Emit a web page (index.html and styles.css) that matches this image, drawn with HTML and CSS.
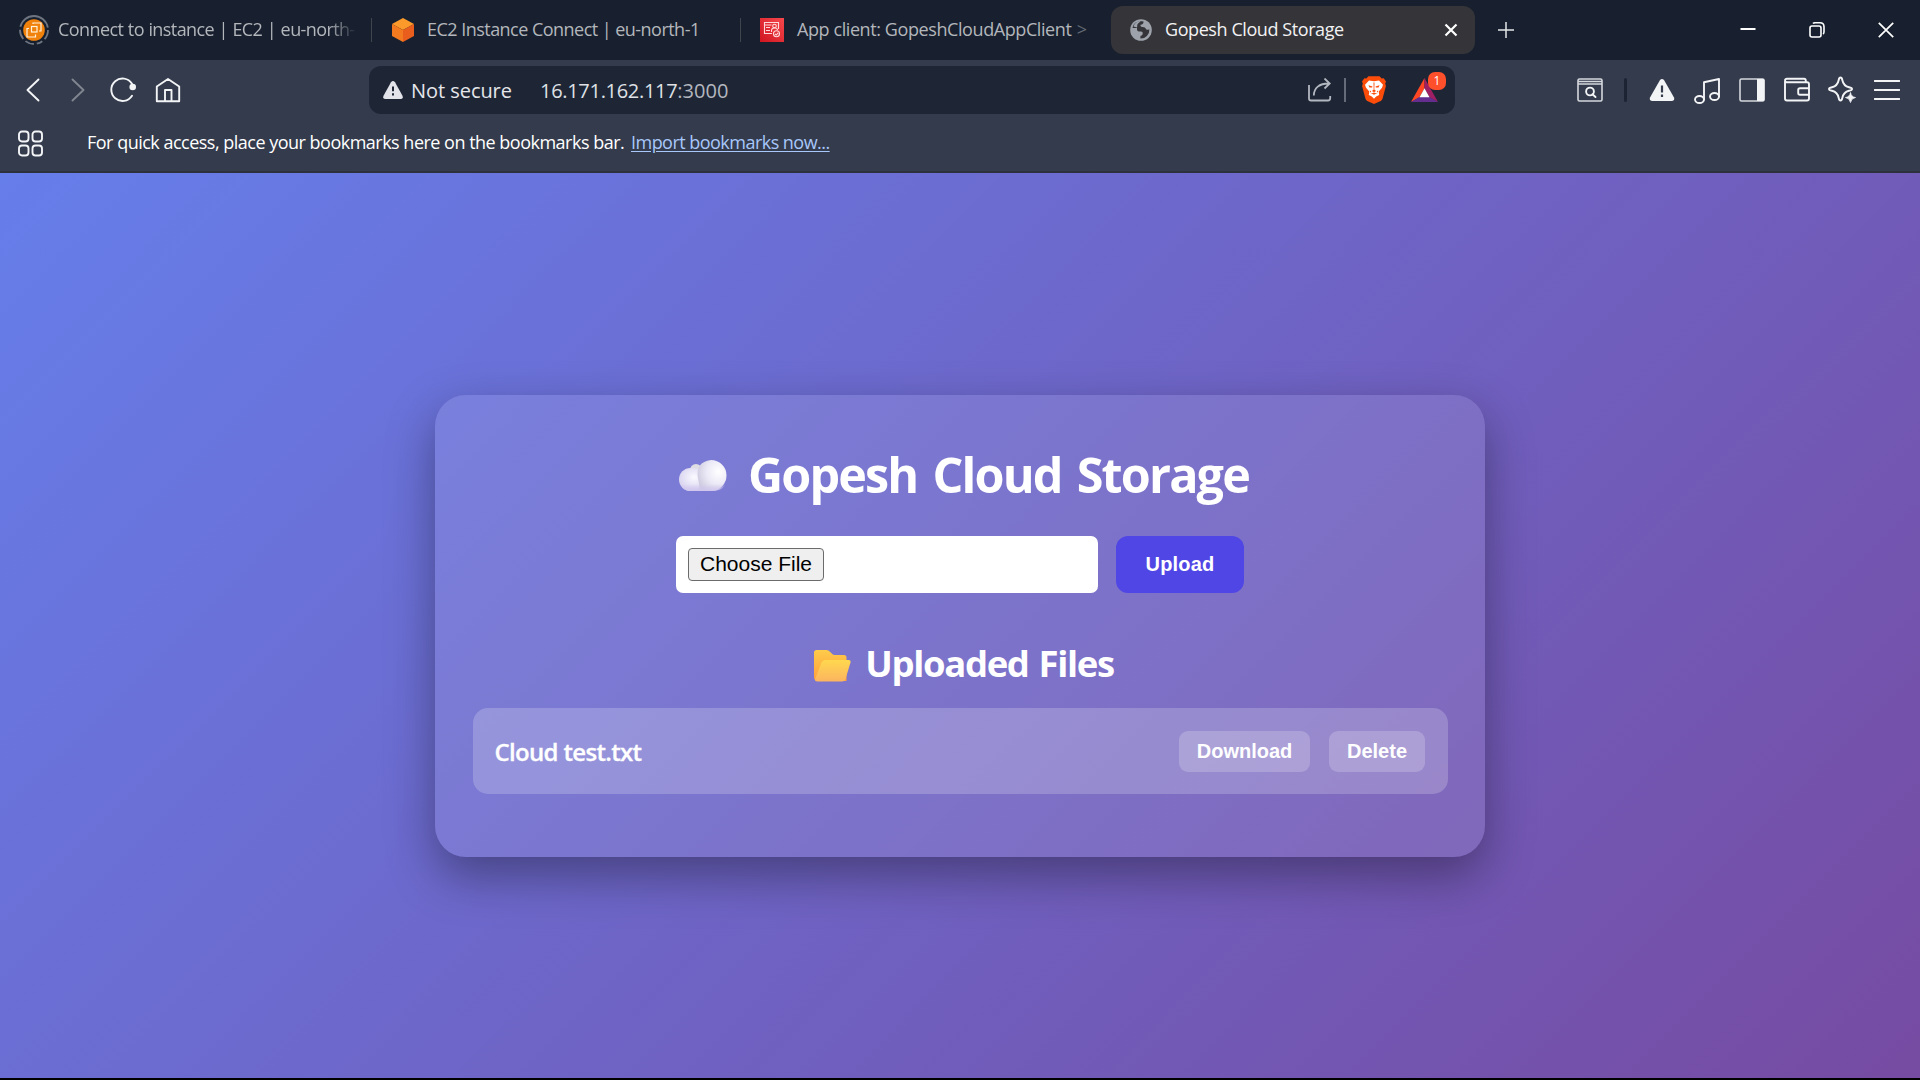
FILE: index.html
```html
<!DOCTYPE html>
<html lang="en">
<head>
<meta charset="utf-8">
<title>Gopesh Cloud Storage</title>
<link rel="stylesheet" href="styles.css">
</head>
<body>
<header class="browser">
  <div class="tab-strip">
    <div class="tab tab-first">
      <svg class="tab-icon ring-icon" width="32" height="32" viewBox="0 0 32 32">
        <circle cx="16" cy="16" r="14" fill="none" stroke="#6f7580" stroke-width="1.800" stroke-dasharray="10 3 6 3 9 3 10 3 38 3"/>
        <circle cx="16" cy="16" r="10.8" fill="#f0820c"/>
        <g fill="none" stroke="#fff2de" stroke-width="1.2"><rect x="13.500" y="12.5" width="5.500" height="5.500"/><path d="M15 10V9h8v8h-2M11 14.500H9V23h8.500v-2.500"/></g>
      </svg>
      <span class="tab-title title-fade">Connect to instance | EC2 | eu-north-1</span>
    </div>
    <div class="tab tab-divided tab-ec2">
      <svg class="tab-icon" width="24" height="24" viewBox="0 0 24 24">
        <path d="M12 0l11 6-11 6L1 6z" fill="#fb9a2a"/><path d="M1 6l11 6v12L1 18z" fill="#f47a20"/><path d="M23 6l-11 6v12l11-6z" fill="#e95e1d"/>
      </svg>
      <span class="tab-title title-ec2">EC2 Instance Connect | eu-north-1</span>
    </div>
    <div class="tab tab-divided tab-cognito">
      <svg class="tab-icon" width="24" height="24" viewBox="0 0 24 24">
        <defs><linearGradient id="red" x1="0" y1="1" x2="1" y2="0"><stop offset="0" stop-color="#cf1420"/><stop offset="1" stop-color="#f7484c"/></linearGradient></defs>
        <rect width="24" height="24" fill="url(#red)"/>
        <g fill="none" stroke="#ffd9d9" stroke-width="1.100"><path d="M12 15.500H4.500v-11h14V11"/><path d="M4.500 7h7M6 9.500h4M6 12.500h4"/><circle cx="14.500" cy="8" r="1.800"/><path d="M11.500 14v-1.500q0-2.500 3-2.500t3 2"/><circle cx="16.500" cy="15.800" r="3"/><path d="M15 15.800l1.200 1.200 2-2.200"/></g>
      </svg>
      <span class="tab-title title-client">App client: GopeshCloudAppClient <span class="faint">&gt;</span></span>
    </div>
    <div class="tab tab-active">
      <svg class="tab-icon" width="22" height="22" viewBox="0 0 22 22">
        <circle cx="11" cy="11" r="10.800" fill="#9da2ab"/>
        <path d="M13.500 2.600c.3 2-1 3-3 3.200-.4 2 1 2.300 3.600 2.400 1.700.2 1.400 2.400 3.300 2.600l2-.3a8.600 8.600 0 0 1-9 9v-2.500c2-.4 2.500-1.700 2.300-3.200-.5-1.600-2-1.300-3.800-1.300-2 0-2-1.800-1.900-3.400H2.600c.2-3.500 3.500-8 10.900-6.500z" fill="#353539"/>
        <path d="M3.500 7.500L7 8.600c.5-1.900-.2-2.600 1-4 .8-1 1.900-.9 2.300-2.600C7 2.200 4.200 4.500 3.500 7.500z" fill="#9da2ab"/>
      </svg>
      <span class="tab-title title-active">Gopesh Cloud Storage</span>
      <svg class="tab-close" width="14" height="14" viewBox="0 0 14 14"><path d="M1.500 1.500l11 11M12.500 1.500l-11 11" stroke="#fff" stroke-width="2.200"/></svg>
    </div>
    <svg class="new-tab" width="16" height="16" viewBox="0 0 16 16"><path d="M0 8h16M8 0v16" stroke="#e3e5e8" stroke-width="1.500"/></svg>
    <div class="window-controls">
      <span class="control"><svg width="16" height="16" viewBox="0 0 16 16"><path d="M.5 7h15" stroke="#fff" stroke-width="2"/></svg></span>
      <span class="control"><svg width="16" height="16" viewBox="0 0 16 16"><g fill="none" stroke="#fff" stroke-width="1.600"><rect x="1" y="4" width="11" height="11" rx="2"/><path d="M4 1.500q.5-.7 2-.7h5q4 0 4 4v5q0 1.600-1 2.200"/></g></svg></span>
      <span class="control"><svg width="16" height="16" viewBox="0 0 16 16"><path d="M.8.8l14.400 14.400M15.200.8L.8 15.200" stroke="#fff" stroke-width="1.700"/></svg></span>
    </div>
  </div>

  <div class="toolbar">
    <div class="group nav-group">
      <span class="tool"><svg width="26" height="26" viewBox="0 0 26 26"><path d="M18.500 2.500L7.500 13l11 10.500" class="line"/></svg></span>
      <span class="tool dim"><svg width="26" height="26" viewBox="0 0 26 26"><path d="M7.500 2.500l11 10.500-11 10.500" class="line"/></svg></span>
      <span class="tool"><svg width="26" height="26" viewBox="0 0 26 26"><path d="M22 6.800A11.200 11.200 0 1 0 22 18.700" class="line"/><circle cx="22.700" cy="10" r="3.300" fill="#f3f4f6"/></svg></span>
      <span class="tool"><svg width="26" height="26" viewBox="0 0 26 26"><path d="M1.800 9.500L13 2l11.200 7.500v14.700H1.800zM10 24V13h6.500v11" class="line"/></svg></span>
    </div>
    <div class="address">
      <svg class="warn" width="20" height="18" viewBox="0 0 20 18"><path d="M8 1.300q2-2.500 4 0l7.500 13.500q1 3-1.500 3.200H2q-2.500-.2-1.500-3.200z" fill="#e3e4e9"/><path d="M10 5.500v4.800M10 12.200v2.300" stroke="#1e2636" stroke-width="2"/></svg>
      <span class="not-secure">Not secure</span>
      <span class="url"><span class="host">16.171.162.117</span><span class="port">:3000</span></span>
      <svg class="share" width="24" height="24" viewBox="0 0 24 24"><g fill="none" stroke="#b3b7bf" stroke-width="1.800"><path d="M1 7v13.500q0 2 2 2h17q2.200 0 2.200-2.200v-2.300"/><path d="M5.800 17.500C6 10 11 5.200 21.500 5.500M16.500.5l5.200 5-5.200 5"/></g></svg>
      <span class="address-rule"></span>
      <svg class="lion" width="24" height="28" viewBox="0 0 24 28">
        <path d="M6.500.3h11l2.200 2.300 2-.3L24 5.500l-.8 2.300.7 2.200-3.300 12.400q-.5 1.500-1.900 2.500L12 28l-6.700-3.100q-1.400-1-1.900-2.500L.1 10l.7-2.200L0 5.500l2.300-3.200 2 .3z" fill="#fb4c0a"/>
        <path d="M7 4.500l5 .8 5-.8 4 4.300-1 3-3.300 3.700.5 3.400-3 1.600L12 22.800l-2.200-2.300-3-1.600.5-3.400L4 11.800l-1-3z" fill="#fff"/>
        <path d="M6.500 9.300l4 1.300-.4.900-2.600.1zM17.500 9.300l-4 1.300.4.900 2.600.1zM11.500 6.500h1l-.2 7 1.700 1.600-2 1.200-2-1.200 1.700-1.600zM8.500 18l3.500-1.400 3.500 1.400-2 .1-1.500.7-1.500-.7zM7.800 14.200l1.500 1.500-1.200.7zM16.200 14.200l-1.500 1.500 1.200.7z" fill="#fb4c0a"/>
      </svg>
      <span class="rewards">
        <svg width="27" height="24" viewBox="0 0 27 24"><path d="M13.500 0L0 24l8.500-4.800 5-9z" fill="#ff4724"/><path d="M13.500 0L27 24l-8.500-4.800-5-9z" fill="#9e1f63"/><path d="M0 24h27l-8.500-5h-10z" fill="#662d91"/><path d="M13.500 10.200l5 9h-10z" fill="#fff"/></svg>
        <span class="badge">1</span>
      </span>
    </div>
    <div class="group action-group">
      <span class="tool find"><svg width="26" height="26" viewBox="0 0 26 26"><rect x="1" y="2" width="24" height="22" rx="1.500" class="thin"/><path d="M1 4.500h24M1 7h24" class="thin"/><circle cx="13" cy="14.500" r="3.900" class="line"/><path d="M15.500 17.200l3 2.800" class="line"/></svg></span>
      <span class="tool-rule"></span>
      <span class="tool"><svg width="26" height="26" viewBox="0 0 26 26"><path d="M11 3q2-2 4 0l10 17.500q1 3-2 3.500H3q-3-.5-2-3.500z" fill="#f3f4f6"/><path d="M13 8.500v7M13 17.500v2.500" stroke="#343c4d" stroke-width="2.200"/></svg></span>
      <span class="tool"><svg width="26" height="28" viewBox="0 0 26 28"><g class="line"><ellipse cx="5.500" cy="23.500" rx="4.500" ry="3.500"/><ellipse cx="20.500" cy="20.500" rx="4.500" ry="3.500"/><path d="M10 23.500V6.300L25 3v17.500"/></g></svg></span>
      <span class="tool"><svg width="26" height="26" viewBox="0 0 26 26"><rect x="1" y="2" width="24" height="22" rx="1.500" class="thin"/><path d="M18 2h6q1.500 0 1.500 1.500v19q0 1.500-1.500 1.500h-6z" fill="#f3f4f6"/></svg></span>
      <span class="tool"><svg width="26" height="26" viewBox="0 0 26 26"><path d="M1 4.500v17q0 2 2 2h20q2 0 2-2V7.300q0-2-2-2H2.500q-1.500-.5-1.500-2t2-1.500h17q1.800 0 1.800 2v1.500M25 11.200H16q-1.800 0-1.800 1.800v3q0 1.800 1.800 1.800h9" class="line"/></svg></span>
      <span class="tool"><svg width="28" height="28" viewBox="0 0 28 28"><path d="M12.500 1.500q1.300 0 1.800 2.500 1.200 6 6.700 7.200 3 .6 3 1.800t-3 1.800q-5.500 1.200-6.700 7.200-.5 2.500-1.800 2.500t-1.800-2.500q-1.200-6-6.700-7.200-3-.6-3-1.800t3-1.800Q9.500 10 10.700 4q.5-2.500 1.800-2.500z" class="line"/><path d="M22.500 16.500q.8 4.600 5 5-4.200.6-5 5-.8-4.400-5-5 4.200-.4 5-5z" fill="#f3f4f6" stroke="#f3f4f6" stroke-width=".8"/></svg></span>
      <span class="tool"><svg width="26" height="26" viewBox="0 0 26 26"><path d="M.5 4h25M.5 13h25M.5 22h25" class="line"/></svg></span>
    </div>
  </div>

  <div class="bookmarks">
    <svg class="apps" width="26" height="28" viewBox="0 0 26 28"><g class="line"><rect x="1" y="1.500" width="9.500" height="10" rx="3"/><rect x="14.500" y="1.500" width="9.500" height="10" rx="3"/><rect x="1" y="15.500" width="9.500" height="10" rx="3"/><rect x="14.500" y="15.500" width="9.500" height="10" rx="3"/></g></svg>
    <span class="hint">For quick access, place your bookmarks here on the bookmarks bar.</span>
    <a class="import">Import bookmarks now...</a>
  </div>
</header>

<main class="page">
  <section class="card">
    <h1 class="title">
      <svg class="cloud" width="48" height="31" viewBox="0 0 48 31">
        <defs>
          <radialGradient id="puffR" cx=".72" cy=".38" r=".75"><stop offset="0" stop-color="#fff"/><stop offset=".55" stop-color="#ebe9f6"/><stop offset="1" stop-color="#cfcbe0"/></radialGradient>
          <radialGradient id="puffL" cx=".55" cy=".4" r=".65"><stop offset="0" stop-color="#fbfaff"/><stop offset="1" stop-color="#d5cfee"/></radialGradient>
          <linearGradient id="base" x1="0" y1="0" x2="0" y2="1"><stop offset=".4" stop-color="#d0c6ee" stop-opacity="0"/><stop offset="1" stop-color="#d0c6ee"/></linearGradient>
        </defs>
        <circle cx="17" cy="10" r="6" fill="#dedde4"/>
        <path d="M11.500 8a11.500 11.500 0 0 0 0 23H28V14q-5-6-16.500-6z" fill="url(#puffL)"/>
        <path d="M32 0a15.500 15.500 0 0 1 0 31H20q1-6-1-12.500Q16 2 32 0z" fill="url(#puffR)"/>
        <path d="M0 19.500h48Q46 31 33 31H11.500Q1 30.500 0 19.500z" fill="url(#base)"/>
      </svg>
      <span>Gopesh Cloud Storage</span>
    </h1>
    <div class="upload-form">
      <div class="file-field"><button class="choose">Choose File</button></div>
      <button class="upload">Upload</button>
    </div>
    <h2 class="subtitle">
      <svg class="folder" width="37" height="32" viewBox="0 0 37 32">
        <defs>
          <linearGradient id="back" x1="0" y1="0" x2="0" y2="1"><stop offset="0" stop-color="#ffcb4a"/><stop offset="1" stop-color="#ff9f3c"/></linearGradient>
          <linearGradient id="front" x1="0" y1="0" x2="0" y2="1"><stop offset="0" stop-color="#ffd84f"/><stop offset="1" stop-color="#fcb45f"/></linearGradient>
        </defs>
        <path d="M2.500 0h10q2 0 3.500 1.800l2 2q1 1.200 2.700 1.200H30q2.500 0 2.500 2.500V31H4q-4 0-4-4V2.500Q0 0 2.500 0z" fill="url(#back)"/>
        <path d="M11 10h23.500q2.500 0 2 2.400L31.500 29q-.8 2.500-3.500 2.500H3.500Q.5 31.500 1.200 29L7.500 12.500Q8.500 10 11 10z" fill="url(#front)"/>
      </svg>
      <span>Uploaded Files</span>
    </h2>
    <div class="file-row">
      <span class="file-name">Cloud test.txt</span>
      <button class="row-button download">Download</button>
      <button class="row-button delete">Delete</button>
    </div>
  </section>
</main>
</body>
</html>
```
FILE: styles.css
```css
* { box-sizing: border-box; }
body {
  margin: 0;
  height: 1080px;
  display: flex;
  flex-direction: column;
  overflow: hidden;
  background: #000;
  color: #fff;
  font-family: "Open Sans", "Noto Sans", sans-serif;
  font-size: 18px;
}
svg { display: block; flex: none; }
button { margin: 0; font-family: "Liberation Sans", Arial, sans-serif; font-size: 20px; }
.line { fill: none; stroke: #f3f4f6; stroke-width: 1.9; stroke-linecap: round; stroke-linejoin: round; }
.thin { fill: none; stroke: #d5d8dd; stroke-width: 1.6; }
.dim { opacity: .4; }

/* Browser chrome */
.browser { flex: none; height: 173px; background: #333b4c; border-bottom: 2px solid #2c313b; }
.tab-strip { display: flex; align-items: center; height: 60px; background: #18202f; }
.tab { display: flex; align-items: center; flex: none; height: 48px; }
.tab-first { width: 371px; padding-left: 18px; }
.tab-title { height: 24px; line-height: 23px; white-space: nowrap; color: #b3b6bb; }
.ring-icon { margin-right: 8px; }
.title-fade { width: 312px; letter-spacing: -.58px; word-spacing: .4px; mask-image: linear-gradient(90deg, #000 270px, transparent 299px); }
.tab-divided { width: 369px; padding-left: 20px; }
.tab-divided::before { content: ""; width: 1px; height: 24px; margin-right: 20px; margin-left: -20px; background: #40444c; }
.tab-divided .tab-icon { margin-right: 13px; }
.tab-ec2 .tab-icon { margin-left: -1px; margin-right: 12px; }
.tab-cognito .tab-icon { margin-left: -1px; }
.title-ec2 { letter-spacing: -.53px; }
.title-client { letter-spacing: -.41px; }
.faint { color: #646a75; margin-left: 1px; }
.tab-active { width: 364px; margin-left: 2px; padding: 0 17px 0 19px; border-radius: 12px; background: #353539; }
.title-active { flex: 1; margin-left: 13px; color: #f2f2f3; letter-spacing: -.42px; }
.new-tab { margin-left: 23px; }
.window-controls { display: flex; margin-left: auto; }
.control { display: flex; justify-content: center; width: 69px; }

.toolbar { display: flex; align-items: center; height: 60px; padding: 0 11px 0 10px; }
.group { display: flex; align-items: center; }
.action-group { margin-left: auto; }
.tool { display: flex; justify-content: center; width: 45px; }
.address { display: flex; align-items: center; width: 1086px; height: 48px; margin-left: 179px; padding: 0 17px 0 14px; border-radius: 12px; background: #1e2636; font-size: 20px; white-space: nowrap; }
.not-secure { margin-left: 8px; width: 129px; color: #e6e7eb; letter-spacing: -.05px; }
.url { flex: 1; }
.host { color: #dfe1e5; letter-spacing: -.3px; }
.port { color: #b4b7bf; }
.address-rule { width: 2px; height: 24px; margin: 0 16px 0 12px; background: #656b78; }
.rewards { position: relative; margin-left: 25px; }
.rewards svg { margin-bottom: 1px; }
.badge { position: absolute; left: 17px; top: -6px; width: 18px; height: 18px; border-radius: 7px; background: #ff4f2b; color: #fff; font-size: 12px; line-height: 18px; text-align: center; }
.find { width: 40px; }
.tool-rule { width: 3px; height: 24px; margin: 0 12px 0 14px; border-radius: 2px; background: #1c2434; }

.bookmarks { display: flex; align-items: center; height: 46px; padding-left: 17.5px; }
.bookmarks .apps { margin-top: 1px; }
.hint { width: 544px; margin: -2px 0 0 43.5px; white-space: nowrap; letter-spacing: -.506px; }
.import { margin-top: -2px; color: #a8c7fa; text-decoration: underline; text-underline-offset: 2px; white-space: nowrap; letter-spacing: -.53px; }

/* Page content */
.page { flex: none; height: 905px; padding-top: 222px; background: linear-gradient(135deg, #667eea, #764ba2); }
.card { width: 1050px; height: 462px; margin: 0 auto; padding: 49px 37.5px 0; border-radius: 31px; background: rgba(255, 255, 255, .1); box-shadow: 0 19px 48px rgba(0, 0, 0, .36); }
.title, .subtitle { display: flex; align-items: center; justify-content: center; margin: 0; font-weight: 700; white-space: nowrap; }
.title { height: 60px; padding-left: 8px; font-size: 48.5px; line-height: 60px; letter-spacing: -1.85px; word-spacing: 4.4px; }
.cloud { margin: 3px 21px 0 0; }
.upload-form { display: flex; justify-content: center; gap: 18px; margin-top: 32px; }
.file-field { display: flex; align-items: center; width: 422px; height: 57px; padding-left: 12px; border-radius: 7px; background: #fff; }
.choose { width: 136px; height: 33px; padding: 0 0 1px; border: 1px solid #6b6b6b; border-radius: 4px; background: #efefef; color: #000; font-size: 21px; }
.upload { width: 128px; height: 57px; padding: 0; border: 0; border-radius: 12px; background: #4f46e5; color: #fff; font-weight: 700; letter-spacing: .2px; }
.subtitle { height: 50px; margin-top: 45px; padding-left: 8px; font-size: 36.5px; line-height: 50px; letter-spacing: -1.35px; word-spacing: 1.8px; }
.folder { margin: 6px 14px 0 0; }
.file-row { display: flex; align-items: center; height: 86px; margin-top: 20px; padding: 0 23px 0 22px; border-radius: 15px; background: rgba(255, 255, 255, .2); }
.file-name { flex: 1; font-size: 24px; font-weight: 600; letter-spacing: -.67px; -webkit-text-stroke: .3px #fff; }
.row-button { height: 41px; padding: 0 0 0 1px; border: 0; border-radius: 9px; background: rgba(255, 255, 255, .2); color: #fff; font-weight: 700; }
.download { width: 131px; }
.delete { width: 96px; margin-left: 19px; }
```
